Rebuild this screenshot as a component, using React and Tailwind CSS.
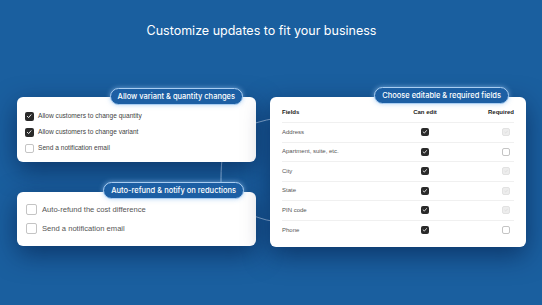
import React from "react";

// small checkbox used in every card
function Box({ size = 9, state = "off" }) {
  const base = "flex items-center justify-center rounded-[2px] shrink-0";
  if (state === "on") {
    return (
      <span className={`${base} bg-[#2a2a2a]`} style={{ width: size, height: size }}>
        <svg viewBox="0 0 10 10" className="w-[70%] h-[70%]">
          <path d="M2 5.2 L4.2 7.3 L8 2.8" fill="none" stroke="#fff" strokeWidth="1.4" strokeLinecap="round" strokeLinejoin="round" />
        </svg>
      </span>
    );
  }
  if (state === "disabled") {
    return (
      <span className={`${base} bg-[#ededed] border border-[#e2e2e2]`} style={{ width: size, height: size }}>
        <svg viewBox="0 0 10 10" className="w-[70%] h-[70%]">
          <path d="M2 5.2 L4.2 7.3 L8 2.8" fill="none" stroke="#d4d4d4" strokeWidth="1.3" strokeLinecap="round" strokeLinejoin="round" />
        </svg>
      </span>
    );
  }
  return <span className={`${base} bg-white border border-[#c4c4c4]`} style={{ width: size, height: size }} />;
}

function Badge({ children, className }) {
  return (
    <div
      className={`absolute h-[17px] px-[7px] flex items-center rounded-full bg-[#1c5fa4] border-[1.5px] border-[#a9cdf1] shadow-[0_0_5px_rgba(150,195,240,0.7)] text-white text-[7.5px] font-medium font-['Inter',sans-serif] whitespace-nowrap ${className}`}
    >
      {children}
    </div>
  );
}

const fields = [
  { name: "Address", required: "disabled" },
  { name: "Apartment, suite, etc.", required: "off" },
  { name: "City", required: "disabled" },
  { name: "State", required: "disabled" },
  { name: "PIN code", required: "disabled" },
  { name: "Phone", required: "off" },
];

export default function App() {
  return (
    <div className="w-[542px] h-[305px] relative overflow-hidden bg-[#1a5f9f] font-['Liberation_Sans',sans-serif]">
      {/* connector lines between the cards */}
      <svg className="absolute inset-0 pointer-events-none" width="542" height="305">
        <g fill="none" stroke="rgba(175,210,245,0.85)" strokeWidth="1">
          <path d="M250 124 C 258 123, 264 120, 272 119" />
          <path d="M222 160 C 221 168, 221 175, 221 184" />
          <path d="M250 215 C 258 217, 264 220, 272 221" />
        </g>
      </svg>

      <h1 className="relative pt-[22px] pr-[19px] text-center text-[12.5px] leading-[18px] text-white font-['Inter',sans-serif]">
        Customize updates to fit your business
      </h1>

      <div className="relative flex mt-[57px] pl-[17px] gap-[14px]">
        <div className="w-[239px] flex flex-col gap-[30px]">
          <div className="relative h-[65px] bg-white rounded-[6px] shadow-[0_8px_26px_rgba(0,20,60,0.55)] pt-[11px] px-[8px]">
            <Badge className="right-[13px] top-[-9px]">Allow variant &amp; quantity changes</Badge>
            {[
              ["Allow customers to change quantity", "on"],
              ["Allow customers to change variant", "on"],
              ["Send a notification email", "off"],
            ].map(([label, state]) => (
              <div key={label} className="h-[16px] flex items-center gap-[4px]">
                <Box size={9} state={state} />
                <span className="text-[6.6px] text-[#444]">{label}</span>
              </div>
            ))}
          </div>

          <div className="relative h-[54px] bg-white rounded-[6px] shadow-[0_8px_26px_rgba(0,20,60,0.55)] pt-[8px] px-[9px]">
            <Badge className="right-[12px] top-[-10px]">Auto-refund &amp; notify on reductions</Badge>
            {["Auto-refund the cost difference", "Send a notification email"].map((label) => (
              <div key={label} className="h-[19px] flex items-center gap-[5px]">
                <Box size={11} state="off" />
                <span className="text-[7.6px] text-[#555]">{label}</span>
              </div>
            ))}
          </div>
        </div>

        <div className="relative w-[256px] h-[150px] bg-white rounded-[6px] shadow-[0_8px_26px_rgba(0,20,60,0.55)] pt-[6px] px-[12px]">
          <Badge className="right-[17px] top-[-10px]">Choose editable &amp; required fields</Badge>
          <div className="h-[20px] grid grid-cols-[1fr_40px_69px] items-center border-b border-[#f0f0f0] text-[6px] font-bold text-[#222]">
            <span>Fields</span>
            <span className="text-center">Can edit</span>
            <span className="text-right">Required</span>
          </div>
          {fields.map((f, i) => (
            <div
              key={f.name}
              className={`h-[19.5px] grid grid-cols-[1fr_40px_69px] items-center text-[6px] text-[#555] ${
                i < fields.length - 1 ? "border-b border-[#f0f0f0]" : ""
              }`}
            >
              <span>{f.name}</span>
              <span className="flex justify-center">
                <Box size={8} state="on" />
              </span>
              <span className="flex justify-end pr-[4px]">
                <Box size={8} state={f.required} />
              </span>
            </div>
          ))}
        </div>
      </div>
    </div>
  );
}
